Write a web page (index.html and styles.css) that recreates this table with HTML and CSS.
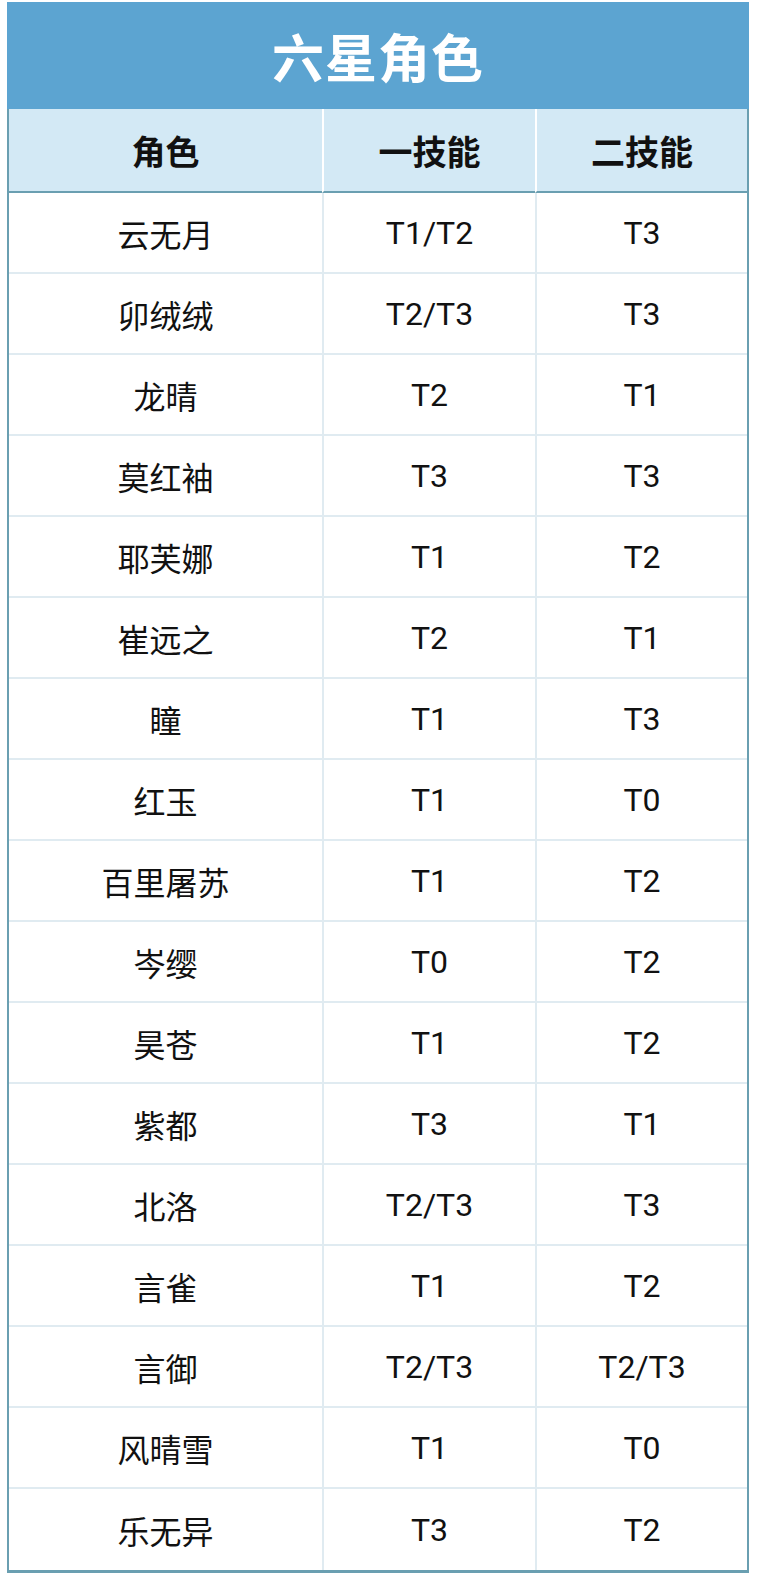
FILE: index.html
```html
<!DOCTYPE html>
<html lang="zh-CN">
<head>
<meta charset="utf-8">
<title>六星角色</title>
<link rel="stylesheet" href="styles.css">
</head>
<body>
<div class="sheet">
  <div class="title">六星角色</div>
  <div class="grid">
    <div class="hcell">角色</div><div class="hcell col">一技能</div><div class="hcell col">二技能</div>
    <div class="cell">云无月</div><div class="cell col">T1/T2</div><div class="cell col">T3</div>
    <div class="cell">卯绒绒</div><div class="cell col">T2/T3</div><div class="cell col">T3</div>
    <div class="cell">龙晴</div><div class="cell col">T2</div><div class="cell col">T1</div>
    <div class="cell">莫红袖</div><div class="cell col">T3</div><div class="cell col">T3</div>
    <div class="cell">耶芙娜</div><div class="cell col">T1</div><div class="cell col">T2</div>
    <div class="cell">崔远之</div><div class="cell col">T2</div><div class="cell col">T1</div>
    <div class="cell">瞳</div><div class="cell col">T1</div><div class="cell col">T3</div>
    <div class="cell">红玉</div><div class="cell col">T1</div><div class="cell col">T0</div>
    <div class="cell">百里屠苏</div><div class="cell col">T1</div><div class="cell col">T2</div>
    <div class="cell">岑缨</div><div class="cell col">T0</div><div class="cell col">T2</div>
    <div class="cell">昊苍</div><div class="cell col">T1</div><div class="cell col">T2</div>
    <div class="cell">紫都</div><div class="cell col">T3</div><div class="cell col">T1</div>
    <div class="cell">北洛</div><div class="cell col">T2/T3</div><div class="cell col">T3</div>
    <div class="cell">言雀</div><div class="cell col">T1</div><div class="cell col">T2</div>
    <div class="cell">言御</div><div class="cell col">T2/T3</div><div class="cell col">T2/T3</div>
    <div class="cell">风晴雪</div><div class="cell col">T1</div><div class="cell col">T0</div>
    <div class="cell last">乐无异</div><div class="cell col last">T3</div><div class="cell col last">T2</div>
  </div>
</div>
</body>
</html>
```
FILE: styles.css
```css
* { box-sizing: border-box; }
html, body { margin: 0; padding: 0; background: #ffffff; }
body {
  font-family: Roboto, "Noto Sans CJK SC", sans-serif;
  color: #111111;
}
.sheet {
  width: 742px;
  margin: 2px 0 0 7px;
}
.title {
  height: 107px;
  background: #5ca4d1;
  color: #ffffff;
  font-family: "Noto Sans CJK SC", sans-serif;
  font-weight: 700;
  font-size: 52px;
  letter-spacing: 1px;
  display: flex;
  align-items: center;
  justify-content: center;
}
.grid {
  display: grid;
  grid-template-columns: 313px 213px 212px;
  border-left: 2px solid #6a9fb1;
  border-right: 2px solid #6a9fb1;
  border-bottom: 3px solid #6a9fb1;
}
.hcell {
  height: 84px;
  background: #d3e9f5;
  border-bottom: 2px solid #6a9fb1;
  font-family: "Noto Sans CJK SC", sans-serif;
  font-weight: 700;
  font-size: 34px;
  color: #111111;
  display: flex;
  align-items: center;
  justify-content: center;
}
.hcell.col { border-left: 2px solid #ffffff; }
.cell {
  height: 81px;
  border-bottom: 2px solid #e0ebf1;
  font-size: 32px;
  color: #111111;
  display: flex;
  align-items: center;
  justify-content: center;
}
.cell.col { border-left: 2px solid #e0ebf1; }
.cell.last { border-bottom: none; }
```
